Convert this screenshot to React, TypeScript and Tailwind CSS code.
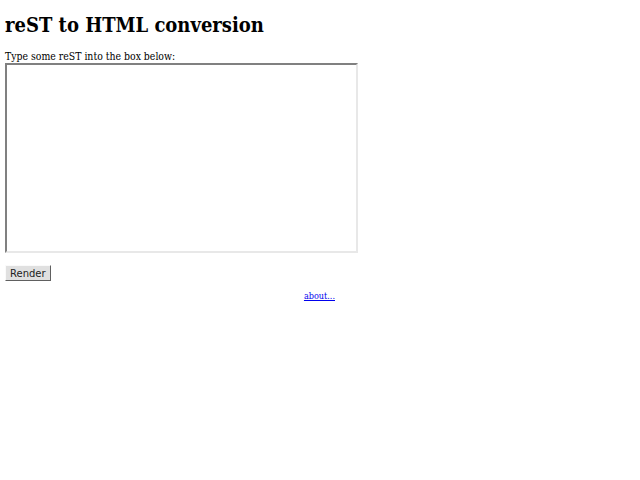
export default function App() {
  return (
    <div className="bg-white min-h-[480px] p-[5px] text-black font-['DejaVu_Serif_Condensed','DejaVu_Serif',serif] font-stretch-condensed">
      <h1 className="text-[20px] font-bold leading-[24px] mt-[8px]">reST to HTML conversion</h1>
      <form className="mt-[13px]" onSubmit={(e) => e.preventDefault()}>
        <div className="text-[10.4px] leading-[13px]">Type some reST into the box below:</div>
        <textarea
          className="block w-[353px] h-[190px] bg-white border-2 border-t-[#808080] border-l-[#808080] border-b-[#e8e8e8] border-r-[#e8e8e8] resize-none outline-none"
          aria-label="reST input"
        />
        <button
          type="submit"
          className="mt-[12px] block h-[16px] px-[4px] bg-[#e0e0e0] border border-t-[#fafafa] border-l-[#fafafa] border-b-[#606060] border-r-[#606060] text-[10px] leading-[13px] font-['DejaVu_Sans',sans-serif] font-stretch-normal text-[#222]"
        >
          Render
        </button>
        <div className="w-[353px] text-right pr-[23px] mt-[1px]">
          <a href="#" className="text-[9px] leading-[12px] text-[#0000ee] underline">about...</a>
        </div>
      </form>
    </div>
  );
}
